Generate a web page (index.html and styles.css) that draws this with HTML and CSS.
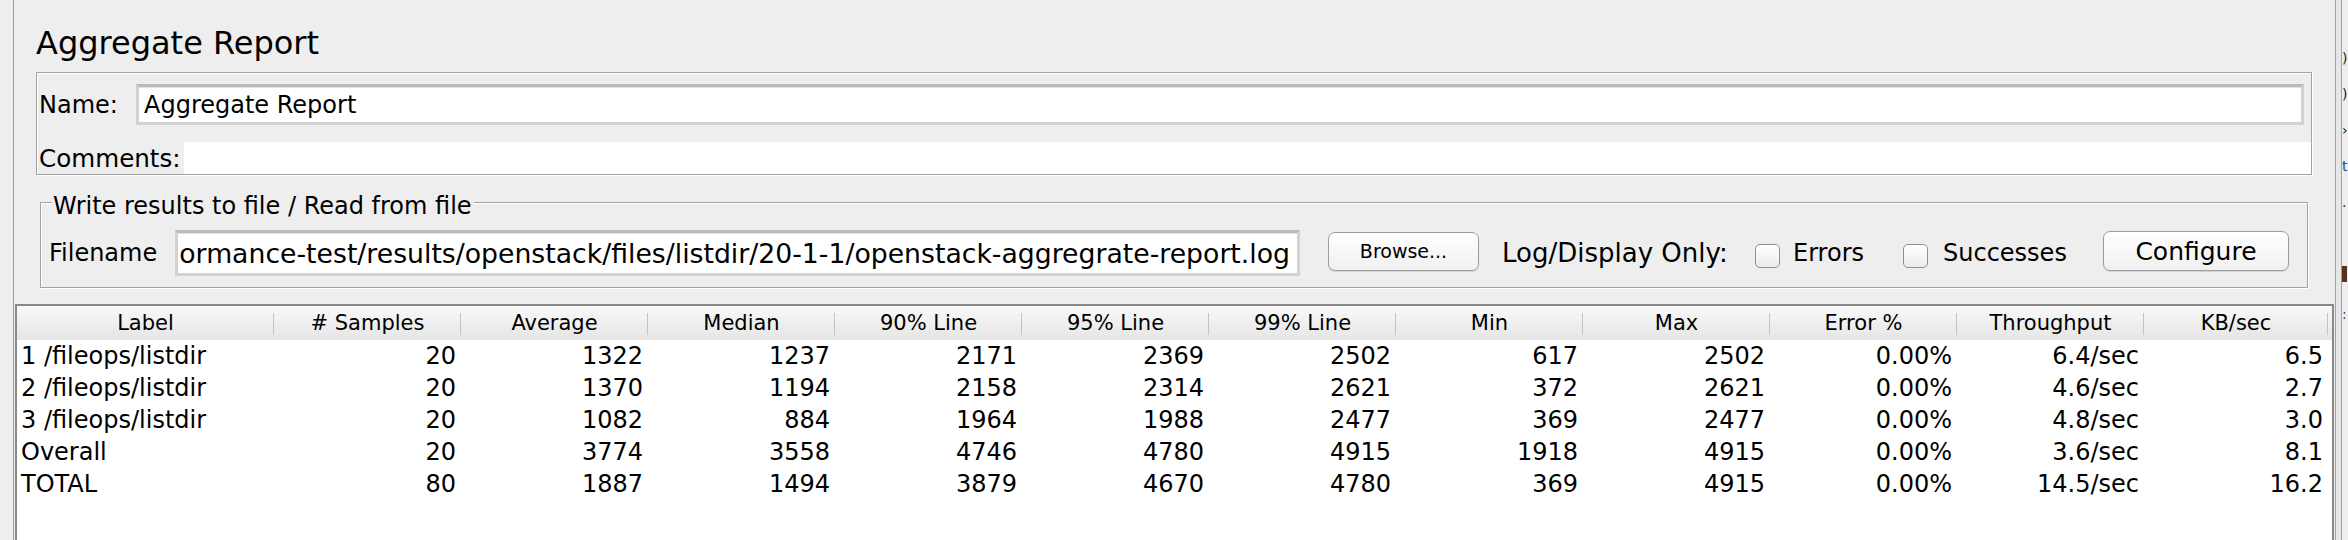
FILE: index.html
```html
<!DOCTYPE html>
<html lang="en">
<head>
<meta charset="utf-8">
<title>Aggregate Report</title>
<link rel="stylesheet" href="styles.css">
</head>
<body>
<div class="app">
  <div class="gutter"></div>
  <main class="panel">
    <h1 class="title">Aggregate Report</h1>

    <section class="namebox">
      <div class="name-row">
        <span class="name-label">Name:</span>
        <div class="field name-field">Aggregate Report</div>
      </div>
      <div class="comments-row">
        <span class="comments-label">Comments:</span>
        <div class="comments-area"></div>
      </div>
    </section>

    <section class="group">
      <div class="group-head"><span class="group-title">Write results to file / Read from file</span></div>
      <div class="group-body">
        <span class="file-label">Filename</span>
        <div class="field file-field"><span class="file-text">ormance-test/results/openstack/files/listdir/20-1-1/openstack-aggregrate-report.log</span></div>
        <button class="btn btn-small">Browse...</button>
        <span class="log-label">Log/Display Only:</span>
        <span class="check"></span><span class="check-text errors-text">Errors</span>
        <span class="check check-2"></span><span class="check-text success-text">Successes</span>
        <button class="btn btn-config">Configure</button>
      </div>
    </section>

    <section class="table">
      <div class="thead">
        <div class="th">Label</div>
        <div class="th"># Samples</div>
        <div class="th">Average</div>
        <div class="th">Median</div>
        <div class="th">90% Line</div>
        <div class="th">95% Line</div>
        <div class="th">99% Line</div>
        <div class="th">Min</div>
        <div class="th">Max</div>
        <div class="th">Error %</div>
        <div class="th">Throughput</div>
        <div class="th">KB/sec</div>
      </div>
      <div class="tr">
        <div class="td">1 /fileops/listdir</div><div class="td">20</div><div class="td">1322</div><div class="td">1237</div><div class="td">2171</div><div class="td">2369</div><div class="td">2502</div><div class="td">617</div><div class="td">2502</div><div class="td">0.00%</div><div class="td">6.4/sec</div><div class="td">6.5</div>
      </div>
      <div class="tr">
        <div class="td">2 /fileops/listdir</div><div class="td">20</div><div class="td">1370</div><div class="td">1194</div><div class="td">2158</div><div class="td">2314</div><div class="td">2621</div><div class="td">372</div><div class="td">2621</div><div class="td">0.00%</div><div class="td">4.6/sec</div><div class="td">2.7</div>
      </div>
      <div class="tr">
        <div class="td">3 /fileops/listdir</div><div class="td">20</div><div class="td">1082</div><div class="td">884</div><div class="td">1964</div><div class="td">1988</div><div class="td">2477</div><div class="td">369</div><div class="td">2477</div><div class="td">0.00%</div><div class="td">4.8/sec</div><div class="td">3.0</div>
      </div>
      <div class="tr">
        <div class="td">Overall</div><div class="td">20</div><div class="td">3774</div><div class="td">3558</div><div class="td">4746</div><div class="td">4780</div><div class="td">4915</div><div class="td">1918</div><div class="td">4915</div><div class="td">0.00%</div><div class="td">3.6/sec</div><div class="td">8.1</div>
      </div>
      <div class="tr">
        <div class="td">TOTAL</div><div class="td">80</div><div class="td">1887</div><div class="td">1494</div><div class="td">3879</div><div class="td">4670</div><div class="td">4780</div><div class="td">369</div><div class="td">4915</div><div class="td">0.00%</div><div class="td">14.5/sec</div><div class="td">16.2</div>
      </div>
    </section>
  </main>
  <div class="split"></div>
  <div class="peek">
    <span class="peek-line p1">)</span>
    <span class="peek-line p2">)</span>
    <span class="peek-line p3">›</span>
    <span class="peek-line p4">t</span>
    <span class="peek-line p5">.</span>
    <span class="peek-block"></span>
    <span class="peek-line p7">:</span>
  </div>
</div>
</body>
</html>
```

FILE: styles.css
```css
* {
  box-sizing: border-box;
}

html,
body {
  margin: 0;
  padding: 0;
}

body {
  width: 2348px;
  height: 540px;
  overflow: hidden;
  background: #eeeeee;
  color: #000;
  font-family: "DejaVu Sans", "Liberation Sans", sans-serif;
}

.app {
  display: flex;
  height: 540px;
}

.gutter {
  flex: none;
  width: 14px;
  border-right: 1px solid #9c9c9c;
}

.panel {
  flex: none;
  width: 2321px;
  display: flex;
  flex-direction: column;
}

/* Title */
.title {
  margin: 0 0 9px 22px;
  padding-top: 23px;
  font-size: 32px;
  line-height: 40px;
  font-weight: normal;
}

/* Name / comments box */
.namebox {
  margin-left: 22px;
  width: 2276px;
  border: 1px solid #a3a3a3;
  box-shadow: inset 1px 1px 0 #fff, 1px 1px 0 #fff;
  padding-left: 2px;
}

.name-row {
  display: flex;
  align-items: center;
  padding-top: 11px;
}

.name-label {
  flex: none;
  width: 97px;
  font-size: 24px;
}

.field {
  background: #fff;
  border: 3px solid #d2d2d2;
  border-top-color: #bababa;
  box-shadow: inset 0 1px 0 #e2e2e2;
  font-size: 24px;
  white-space: nowrap;
  overflow: hidden;
  display: flex;
  align-items: center;
}

.name-field {
  flex: 1;
  height: 41px;
  margin-right: 7px;
  padding-left: 5px;
}

.comments-row {
  display: flex;
  align-items: center;
  margin-top: 17px;
  height: 32px;
}

.comments-label {
  flex: none;
  width: 145px;
  font-size: 24.6px;
  white-space: nowrap;
}

.comments-area {
  flex: 1;
  height: 32px;
  background: #fff;
}

/* Write results group */
.group {
  margin: 17px 0 0 26px;
  width: 2268px;
}

.group-head {
  display: flex;
  height: 28px;
}

.group-head::before,
.group-head::after {
  content: "";
  margin-top: 10px;
  border-top: 1px solid #a3a3a3;
}

.group-head::before {
  flex: none;
  width: 11px;
  border-left: 1px solid #a3a3a3;
  box-shadow: inset 1px 1px 0 #fff;
}

.group-head::after {
  flex: 1;
  border-right: 1px solid #a3a3a3;
  box-shadow: inset 0 1px 0 #fff, 1px 0 0 #fff;
}

.group-title {
  padding: 0 2px 0 1px;
  font-size: 24px;
  line-height: 28px;
  white-space: nowrap;
}

.group-body {
  display: flex;
  align-items: center;
  height: 68px;
  padding: 10px 0 11px 8px;
  border: 1px solid #a3a3a3;
  border-top: none;
  box-shadow: inset 1px 0 0 #fff, 1px 1px 0 #fff;
}

.file-label {
  flex: none;
  width: 126px;
  font-size: 24px;
}

.file-field {
  flex: none;
  width: 1125px;
  height: 46px;
  justify-content: flex-end;
  padding-right: 7px;
  font-size: 26.7px;
}

.file-text {
  flex: none;
}

.btn {
  flex: none;
  padding: 0;
  font-family: inherit;
  color: #000;
  border: 1px solid #9d9d9d;
  border-radius: 7px;
  background: linear-gradient(#ffffff, #f0f0f0);
  box-shadow: 0 1px 1px rgba(0, 0, 0, 0.12);
  margin-bottom: 4px;
}

.btn-small {
  margin-left: 28px;
  width: 151px;
  height: 39px;
  font-size: 19px;
}

.btn-config {
  margin-left: 36px;
  width: 186px;
  height: 40px;
  font-size: 25px;
}

.log-label {
  flex: none;
  margin-left: 23px;
  width: 232px;
  font-size: 26px;
  white-space: nowrap;
}

.check {
  flex: none;
  width: 25px;
  height: 24px;
  margin-left: 21px;
  margin-top: 5px;
  border: 1px solid #8f8f8f;
  border-radius: 5px;
  background: linear-gradient(#ffffff, #ebebeb);
}

.check-2 {
  margin-left: 38px;
}

.check-text {
  flex: none;
  font-size: 24px;
  white-space: nowrap;
}

.errors-text {
  margin-left: 13px;
  width: 72px;
}

.success-text {
  margin-left: 15px;
  width: 124px;
}

/* Results table */
.table {
  flex: 1;
  margin: 16px 0 0 1px;
  width: 2319px;
  background: #fff;
  border: 2px solid #8a8a8a;
  border-bottom: none;
}

.thead,
.tr {
  display: grid;
  grid-template-columns: 257px repeat(10, 187px) 184px;
}

.thead {
  height: 34px;
  background: linear-gradient(#f9f9f9, #e5e5e5);
  font-size: 21px;
  line-height: 34px;
  text-align: center;
}

.th {
  white-space: nowrap;
  background: linear-gradient(#c3c3c3, #c3c3c3) no-repeat right top 7px / 1px 22px;
}

.tr {
  height: 32px;
  font-size: 24px;
  line-height: 32px;
}

.td {
  padding: 0 5px;
  text-align: right;
  white-space: nowrap;
}

.td:first-child {
  padding-left: 4px;
  text-align: left;
}

/* Split divider and neighbouring window edge */
.split {
  flex: none;
  width: 7px;
  border-left: 1px solid #a0a0a0;
  border-right: 1px solid #a0a0a0;
  background: #e7e7e7;
}

.peek {
  flex: none;
  width: 6px;
  overflow: hidden;
  display: flex;
  flex-direction: column;
  font-size: 14px;
  line-height: 36px;
  padding-top: 40px;
  color: #222;
}

.peek-line {
  display: block;
}

.p4,
.p7 {
  color: #2a4a7a;
}

.peek-block {
  display: block;
  width: 5px;
  height: 16px;
  margin: 46px 0 14px;
  background: #5a3320;
}
```
